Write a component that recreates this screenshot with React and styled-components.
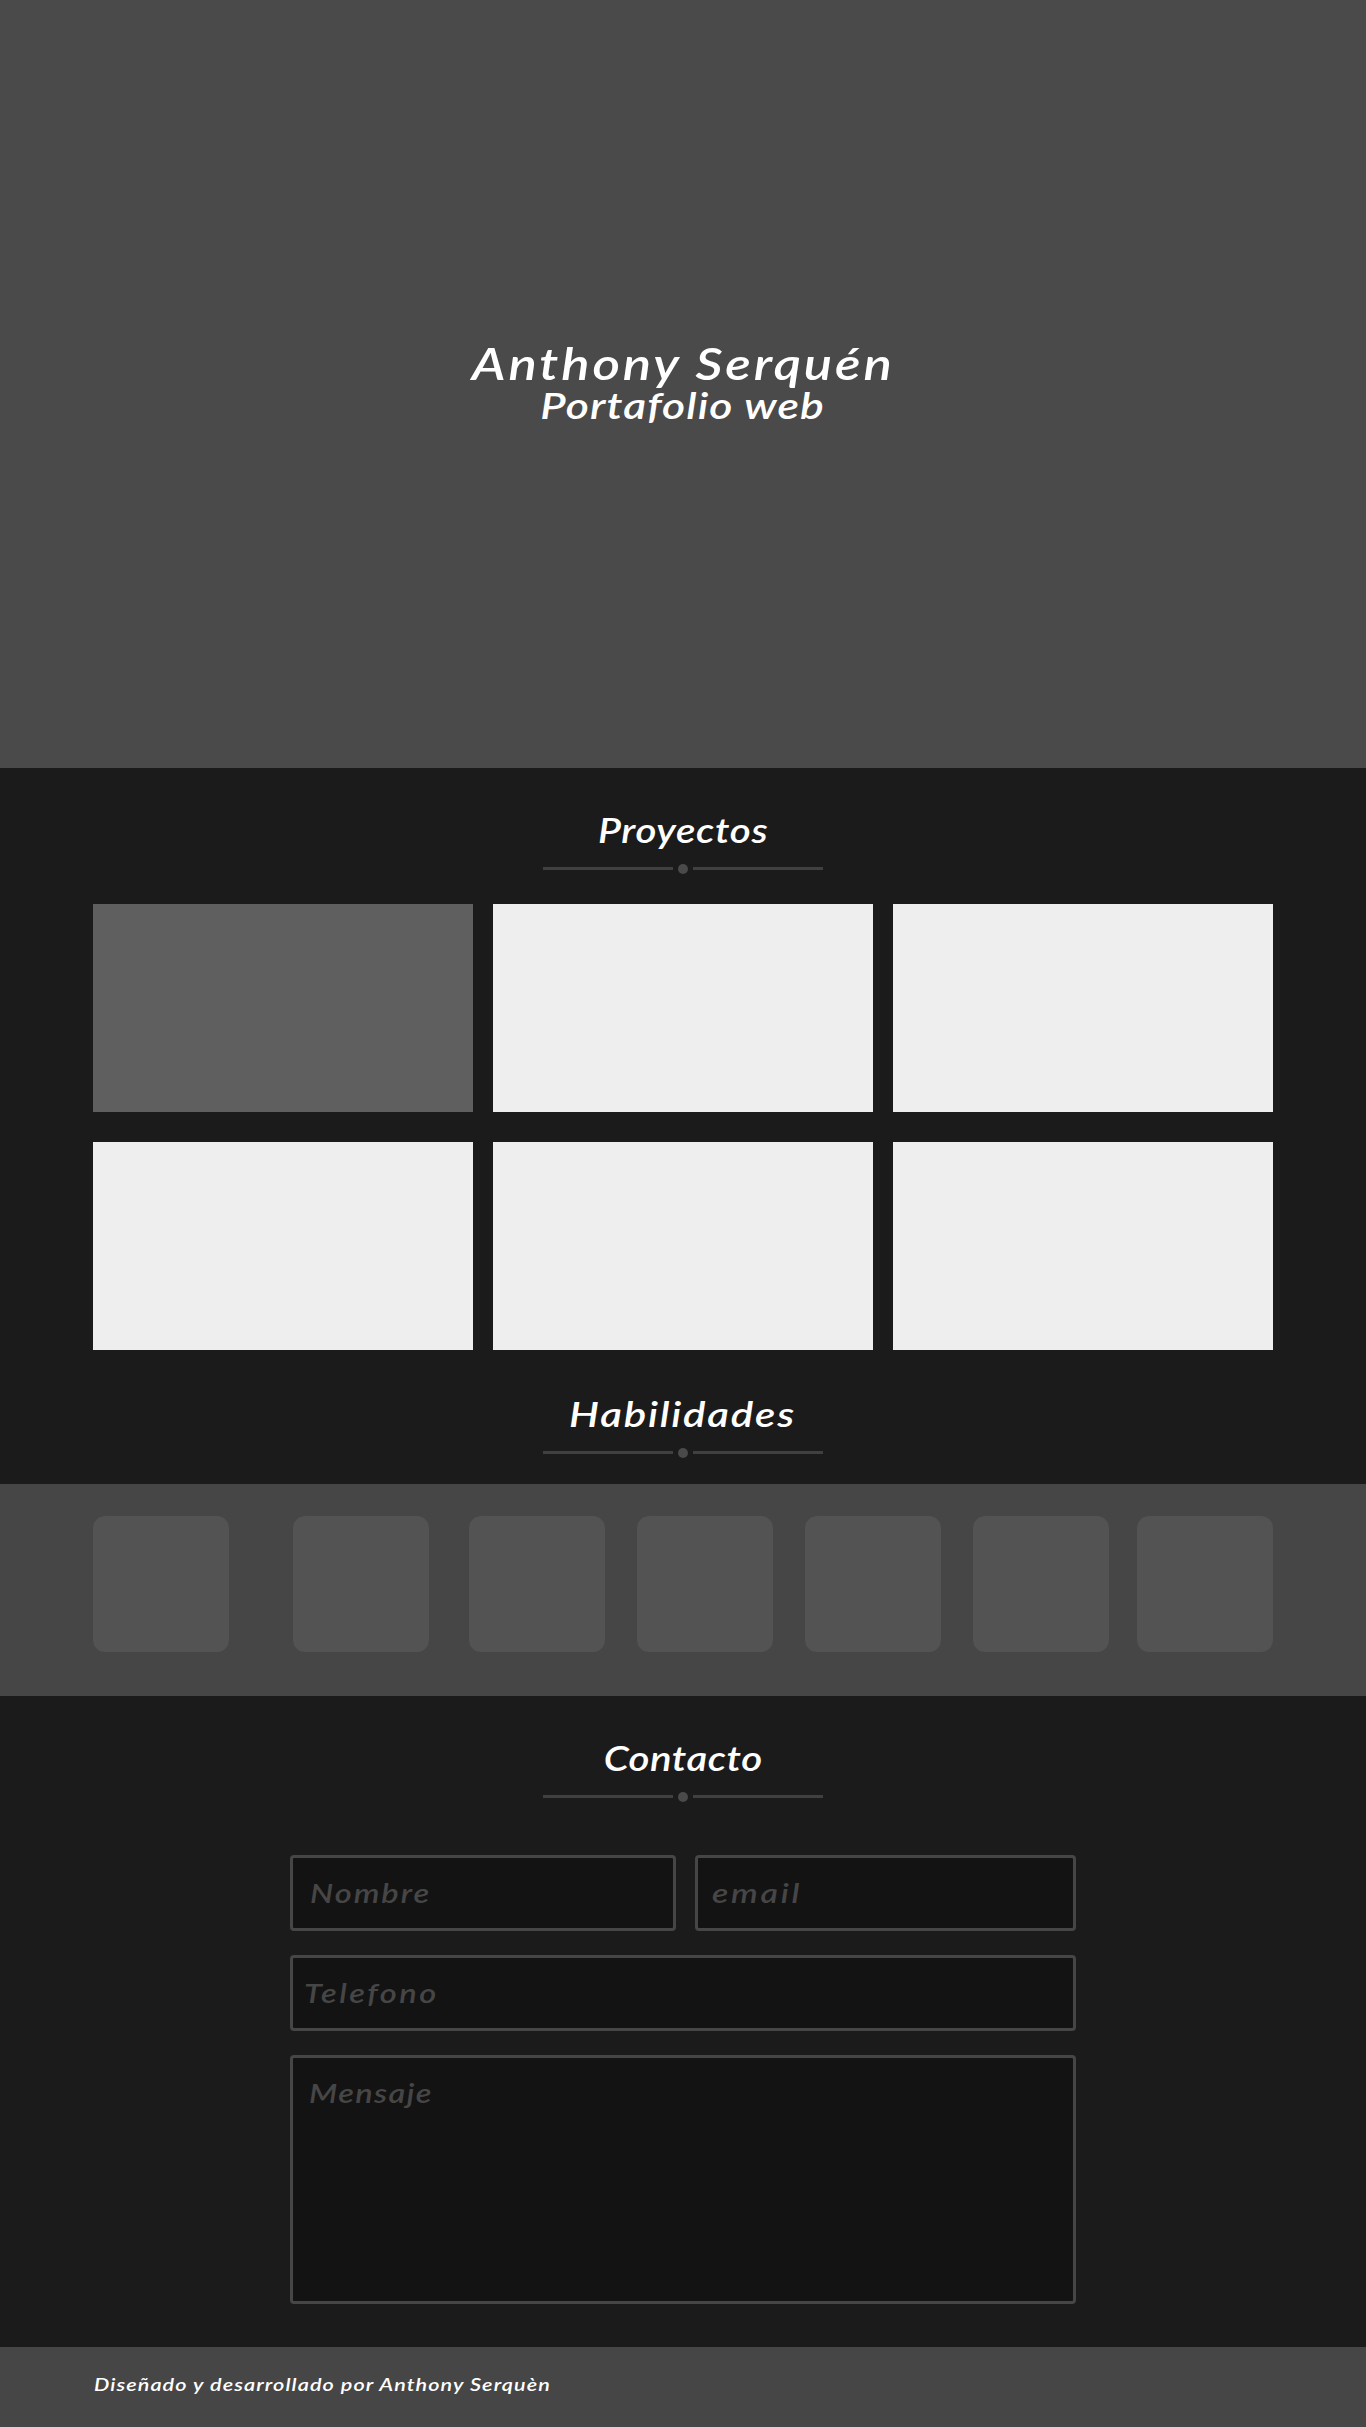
import React from "react";
import styled, { createGlobalStyle } from "styled-components";

const GlobalStyle = createGlobalStyle`
  * { box-sizing: border-box; }
  body {
    margin: 0;
    background: #1b1b1b;
    color: #fff;
    font-family: "Segoe Script", Lato, cursive;
    font-style: italic;
    font-weight: 600;
  }
`;

const Page = styled.div`
  width: 1366px;
`;

const Hero = styled.header`
  height: 768px;
  padding-top: 339px;
  background: #4a4a4a;
  text-align: center;
`;

const Line = styled.span`
  display: inline-block;
  white-space: nowrap;
  letter-spacing: ${(p) => p.$tracking}px;
  transform: scaleX(${(p) => p.$stretch});
  transform-origin: ${(p) => (p.$left ? "left" : "center")};
`;

const Name = styled.h1`
  margin: 0;
  font-size: 44px;
  line-height: 48px;
  font-weight: 600;
`;

const Tagline = styled.p`
  margin: 0;
  font-size: 37px;
  line-height: 36px;
`;

const Heading = styled.div`
  display: flex;
  flex-direction: column;
  align-items: center;
  padding-top: ${(p) => p.$top}px;
  margin-bottom: ${(p) => p.$bottom}px;
`;

const Title = styled.h2`
  margin: 0 0 13px;
  font-size: 35px;
  line-height: 43px;
  font-weight: 600;
`;

const Divider = styled.div`
  display: flex;
  align-items: flex-start;
  gap: 5px;
  height: 10px;
`;

const Rule = styled.span`
  width: 130px;
  height: 3px;
  margin-top: 3px;
  background: #404040;
`;

const Dot = styled.span`
  width: 10px;
  height: 10px;
  border-radius: 50%;
  background: #4a4a4a;
`;

const Projects = styled.div`
  display: grid;
  grid-template-columns: repeat(3, 380px);
  grid-auto-rows: 208px;
  gap: 30px 20px;
  padding: 0 93px;
`;

const Project = styled.article`
  background: ${(p) => (p.$active ? "#5f5f5f" : "#eeeeee")};
`;

const Skills = styled.div`
  display: flex;
  height: 212px;
  padding: 32px 93px 0;
  background: #464646;
`;

const Skill = styled.div`
  width: 136px;
  height: 136px;
  margin-right: ${(p) => p.$gap}px;
  border-radius: 12px;
  background: #535353;
`;

const Form = styled.form`
  display: grid;
  grid-template-columns: 386px 381px;
  grid-template-rows: 76px 76px 249px;
  gap: 24px 19px;
  width: 786px;
  margin: 0 auto 43px;
`;

const Field = styled.label`
  grid-column: ${(p) => (p.$wide ? "1 / -1" : "auto")};
  padding: 20px 0 0 ${(p) => p.$padX}px;
  border: 3px solid #464646;
  border-radius: 4px;
  background: #131313;
  color: #464646;
  font-size: 26px;
  line-height: 30px;
`;

const Footer = styled.footer`
  height: 80px;
  padding: 25px 0 0 94px;
  background: #464646;
  font-size: 18px;
  line-height: 24px;
`;

const projects = [true, false, false, false, false, false];
const skillGaps = [64, 40, 32, 32, 32, 28, 0];
const fields = [
  { text: "Nombre", padX: 17, tracking: 1.6, stretch: 1.25 },
  { text: "email", padX: 14, tracking: 2.1, stretch: 1.3 },
  { text: "Telefono", padX: 11, tracking: 2, stretch: 1.25, wide: true },
  { text: "Mensaje", padX: 16, tracking: 1.1, stretch: 1.25, wide: true },
];

function SectionHeading({ text, tracking, stretch, top, bottom }) {
  return (
    <Heading $top={top} $bottom={bottom}>
      <Title>
        <Line $tracking={tracking} $stretch={stretch}>{text}</Line>
      </Title>
      <Divider>
        <Rule />
        <Dot />
        <Rule />
      </Divider>
    </Heading>
  );
}

export default function App() {
  return (
    <Page>
      <GlobalStyle />
      <Hero>
        <Name>
          <Line $tracking={2.4} $stretch={1.2}>Anthony Serquén</Line>
        </Name>
        <Tagline>
          <Line $tracking={0.9} $stretch={1.2}>Portafolio web</Line>
        </Tagline>
      </Hero>
      <section>
        <SectionHeading text="Proyectos" tracking={0.6} stretch={1.15} top={40} bottom={30} />
        <Projects>
          {projects.map((active, i) => (
            <Project key={i} $active={active} />
          ))}
        </Projects>
      </section>
      <section>
        <SectionHeading text="Habilidades" tracking={1.5} stretch={1.2} top={42} bottom={26} />
        <Skills>
          {skillGaps.map((gap, i) => (
            <Skill key={i} $gap={gap} />
          ))}
        </Skills>
      </section>
      <section>
        <SectionHeading text="Contacto" tracking={0.45} stretch={1.15} top={40} bottom={53} />
        <Form>
          {fields.map((f) => (
            <Field key={f.text} $padX={f.padX} $wide={f.wide}>
              <Line $left $tracking={f.tracking} $stretch={f.stretch}>{f.text}</Line>
            </Field>
          ))}
        </Form>
      </section>
      <Footer>
        <Line $left $tracking={0.9} $stretch={1.2}>Diseñado y desarrollado por Anthony Serquèn</Line>
      </Footer>
    </Page>
  );
}
